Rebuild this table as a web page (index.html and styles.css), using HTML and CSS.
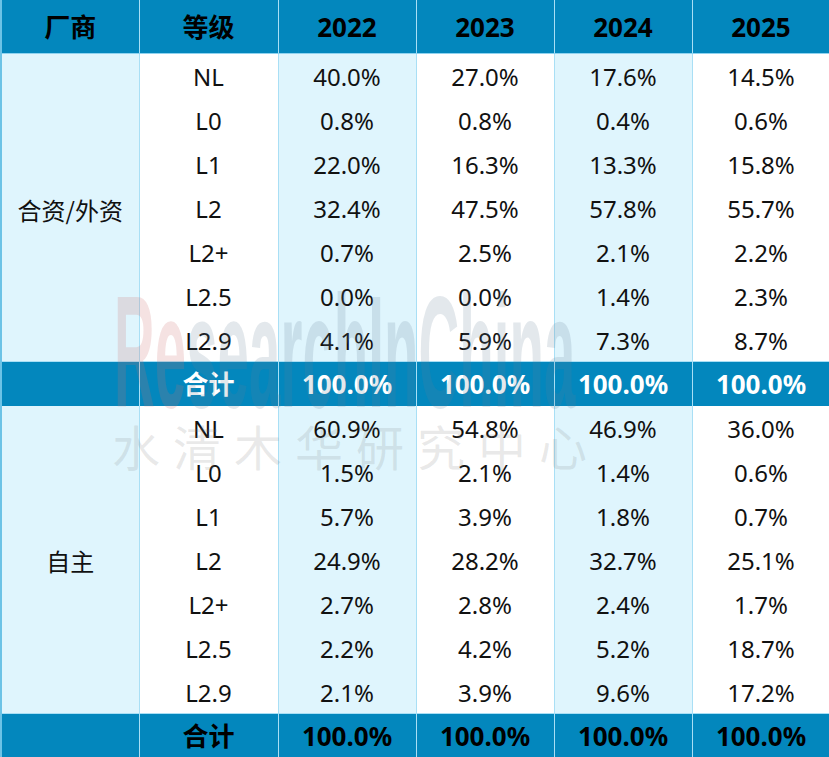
FILE: index.html
```html
<!DOCTYPE html>
<html lang="zh">
<head>
<meta charset="utf-8">
<title>L2 渗透率</title>
<link rel="stylesheet" href="styles.css">
</head>
<body>
<div class="wrap">
<table class="grid">
  <colgroup>
    <col class="c-maker"><col class="c-level"><col class="c-a"><col class="c-b"><col class="c-a"><col class="c-b">
  </colgroup>
  <thead>
    <tr class="head"><th>厂商</th><th>等级</th><th>2022</th><th>2023</th><th>2024</th><th>2025</th></tr>
  </thead>
  <tbody>
    <tr class="first"><td class="maker" rowspan="7">合资/外资</td><td>NL</td><td>40.0%</td><td>27.0%</td><td>17.6%</td><td>14.5%</td></tr>
    <tr><td>L0</td><td>0.8%</td><td>0.8%</td><td>0.4%</td><td>0.6%</td></tr>
    <tr><td>L1</td><td>22.0%</td><td>16.3%</td><td>13.3%</td><td>15.8%</td></tr>
    <tr><td>L2</td><td>32.4%</td><td>47.5%</td><td>57.8%</td><td>55.7%</td></tr>
    <tr><td>L2+</td><td>0.7%</td><td>2.5%</td><td>2.1%</td><td>2.2%</td></tr>
    <tr><td>L2.5</td><td>0.0%</td><td>0.0%</td><td>1.4%</td><td>2.3%</td></tr>
    <tr><td>L2.9</td><td>4.1%</td><td>5.9%</td><td>7.3%</td><td>8.7%</td></tr>
    <tr class="total light"><td></td><td>合计</td><td>100.0%</td><td>100.0%</td><td>100.0%</td><td>100.0%</td></tr>
    <tr class="first"><td class="maker" rowspan="7">自主</td><td>NL</td><td>60.9%</td><td>54.8%</td><td>46.9%</td><td>36.0%</td></tr>
    <tr><td>L0</td><td>1.5%</td><td>2.1%</td><td>1.4%</td><td>0.6%</td></tr>
    <tr><td>L1</td><td>5.7%</td><td>3.9%</td><td>1.8%</td><td>0.7%</td></tr>
    <tr><td>L2</td><td>24.9%</td><td>28.2%</td><td>32.7%</td><td>25.1%</td></tr>
    <tr><td>L2+</td><td>2.7%</td><td>2.8%</td><td>2.4%</td><td>1.7%</td></tr>
    <tr><td>L2.5</td><td>2.2%</td><td>4.2%</td><td>5.2%</td><td>18.7%</td></tr>
    <tr><td>L2.9</td><td>2.1%</td><td>3.9%</td><td>9.6%</td><td>17.2%</td></tr>
    <tr class="total last"><td></td><td>合计</td><td>100.0%</td><td>100.0%</td><td>100.0%</td><td>100.0%</td></tr>
  </tbody>
</table>
<div class="wm-en"><span class="wm-re">Re</span>searchInChina</div>
<div class="wm-cn">水清木华研究中心</div>
</div>
</body>
</html>
```
FILE: styles.css
```css
html, body {
  margin: 0;
  padding: 0;
  background: #ffffff;
}
body {
  width: 829px;
  height: 757px;
  overflow: hidden;
  font-family: "Noto Sans", "Noto Sans CJK SC", sans-serif;
  color: #111111;
}
.wrap {
  position: relative;
  width: 829px;
  height: 757px;
}
.grid {
  width: 829px;
  border-collapse: collapse;
  table-layout: fixed;
}
.c-maker { width: 138px; }
.c-level { width: 139px; }
.c-a, .c-b { width: 138px; }
.grid th, .grid td {
  padding: 0;
  text-align: center;
  vertical-align: middle;
  border-left: 1px solid #a9dff5;
  border-right: 1px solid #a9dff5;
  font-size: 24px;
  line-height: 30px;
  white-space: nowrap;
}
.grid th:first-child, .grid td.maker, .total td:first-child {
  border-left: 2px solid #6cc3e6;
}
.head th {
  height: 53px;
  background: #0387bd;
  color: #000000;
  font-weight: 700;
  font-size: 26px;
  border-bottom: 1px solid #8fd3f0;
}
.grid tbody td {
  height: 44px;
  box-sizing: border-box;
  padding-top: 3px;
  background: #ffffff;
}
.grid tbody tr td:nth-last-child(2),
.grid tbody tr td:nth-last-child(4) {
  background: #dff5fd;
}
.grid tbody td.maker {
  background: #dff5fd;
  padding-top: 4px;
  font-family: "Noto Sans CJK SC", sans-serif;
}
.grid tbody tr.total td {
  background: #0387bd;
  font-weight: 700;
  font-size: 26px;
  padding-top: 0;
  border-top: 1px solid #a9dff5;
}
.total.light td {
  color: #ffffff;
}
.total.last td {
  color: #000000;
}
.wm-en {
  position: absolute;
  left: 114px;
  top: 272px;
  font-family: "Liberation Sans", sans-serif;
  font-weight: 700;
  font-size: 160px;
  line-height: 160px;
  white-space: nowrap;
  transform: scaleX(0.353);
  transform-origin: left top;
  color: rgba(100, 125, 150, 0.18);
  pointer-events: none;
}
.wm-re {
  color: rgba(205, 110, 110, 0.2);
}
.wm-cn {
  position: absolute;
  left: 112px;
  top: 412px;
  font-family: "Noto Sans CJK SC", sans-serif;
  font-weight: 400;
  font-size: 48px;
  line-height: 66px;
  letter-spacing: 13px;
  white-space: nowrap;
  color: rgba(120, 120, 120, 0.17);
  pointer-events: none;
}
```
